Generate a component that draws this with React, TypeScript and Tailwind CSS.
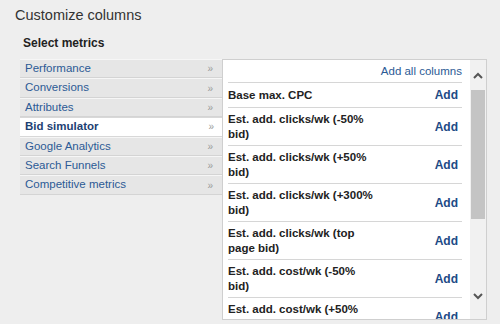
import React from "react";

const cats = [
  "Performance",
  "Conversions",
  "Attributes",
  "Bid simulator",
  "Google Analytics",
  "Search Funnels",
  "Competitive metrics",
];

const rows: string[][] = [
  ["Base max. CPC"],
  ["Est. add. clicks/wk (-50%", "bid)"],
  ["Est. add. clicks/wk (+50%", "bid)"],
  ["Est. add. clicks/wk (+300%", "bid)"],
  ["Est. add. clicks/wk (top", "page bid)"],
  ["Est. add. cost/wk (-50%", "bid)"],
  ["Est. add. cost/wk (+50%", "bid)"],
];

function Chev({ up }: { up?: boolean }) {
  return (
    <svg width="10" height="7" viewBox="0 0 10 7" className="block">
      <path
        d={up ? "M1 6 L5 2 L9 6" : "M1 1 L5 5 L9 1"}
        fill="none"
        stroke="#555"
        strokeWidth="2"
      />
    </svg>
  );
}

export default function App() {
  return (
    <div
      className="w-[500px] h-[324px] bg-[#eeeeee] overflow-hidden relative"
      style={{ fontFamily: '"Liberation Sans", Arial, sans-serif' }}
    >
      <div className="pl-[15px] pt-[6px] text-[14.5px] leading-[18px] text-[#333]">
        Customize columns
      </div>
      <div className="pl-[23px] pt-[12px] text-[12px] leading-[14px] font-bold text-[#222]">
        Select metrics
      </div>
      <div className="flex pl-[20px] pt-[9px]">
        <div className="w-[202px] flex flex-col">
          {cats.map((c) => {
            const sel = c === "Bid simulator";
            return (
              <div
                key={c}
                className={
                  "h-[19.4px] flex items-center pl-[5px] pr-[9px] text-[11.5px] border-t border-b " +
                  (sel
                    ? "bg-white border-t-[#d8d8d8] border-b-[#d8d8d8] font-bold text-[#1d3f73] w-[203px]"
                    : "bg-[#e6e6e6] border-t-[#f6f6f6] border-b-[#d4d4d4] text-[#2c5a95]")
                }
              >
                <span className="flex-1">{c}</span>
                <span className="text-[10px] text-[#9a9a9a] font-normal">»</span>
              </div>
            );
          })}
        </div>
        <div className="w-[265px] h-[261px] bg-white border border-[#cfcfcf] flex overflow-hidden">
          <div className="flex-1 pl-[5px] pr-[8px] flex flex-col overflow-hidden">
            <div className="h-[23px] shrink-0 flex items-center justify-end text-[11.5px] text-[#2c5a95] border-b border-[#d6d6d6] pt-[2px]">
              Add all columns
            </div>
            {rows.map((r, i) => (
              <div
                key={i}
                className={
                  "shrink-0 flex items-center border-b border-[#d6d6d6] " +
                  (i === 0 ? "h-[25px]" : "h-[38px]")
                }
              >
                <div className="flex flex-col text-[11.5px] leading-[15px] font-bold text-[#222] whitespace-nowrap">
                  {r.map((l) => (
                    <span key={l}>{l}</span>
                  ))}
                </div>
                <div className="flex-1" />
                <div className="text-[12px] font-bold text-[#1d4a86] pr-[4px]">Add</div>
              </div>
            ))}
          </div>
          <div className="w-[16px] bg-[#f1f1f1] flex flex-col items-center">
            <div className="h-[30px] flex items-center justify-center">
              <Chev up />
            </div>
            <div className="w-[14px] h-[129px] bg-[#c4c4c4]" />
            <div className="flex-1" />
            <div className="h-[36px] flex items-start pt-[10px] justify-center">
              <Chev />
            </div>
          </div>
        </div>
      </div>
    </div>
  );
}
